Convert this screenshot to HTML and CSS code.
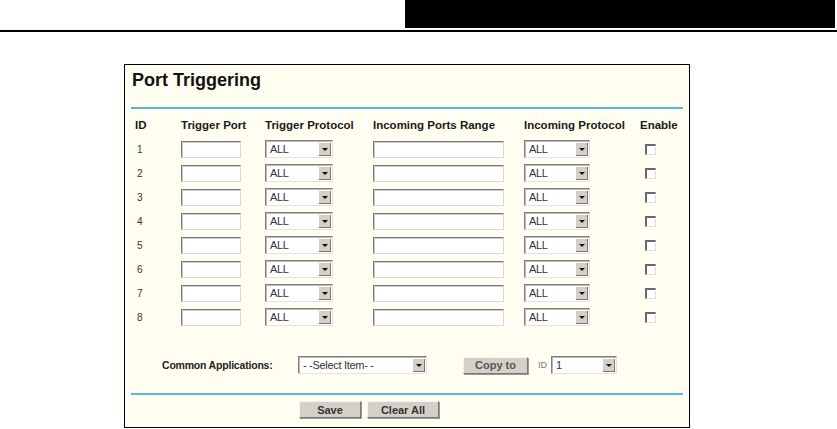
FILE: index.html
```html
<!DOCTYPE html>
<html lang="en">
<head>
  <meta charset="UTF-8">
  <title>Port Triggering</title>
  <link rel="stylesheet" href="styles.css">
</head>
<body>
  <div class="topbar"><div class="blackbox"></div></div>
  <div class="rule"></div>

  <div class="panel">
    <h1 class="title">Port Triggering</h1>
    <div class="bluerule"></div>

    <div class="grid">
      <div class="head">ID</div>
      <div class="head">Trigger Port</div>
      <div class="head">Trigger Protocol</div>
      <div class="head">Incoming Ports Range</div>
      <div class="head">Incoming Protocol</div>
      <div class="head">Enable</div>

      <div class="num">1</div>
      <div><input class="txt port" type="text"></div>
      <div><div class="combo"><span>ALL</span><b class="arrow"></b></div></div>
      <div><input class="txt range" type="text"></div>
      <div><div class="combo narrow"><span>ALL</span><b class="arrow"></b></div></div>
      <div><span class="check"></span></div>

      <div class="num">2</div>
      <div><input class="txt port" type="text"></div>
      <div><div class="combo"><span>ALL</span><b class="arrow"></b></div></div>
      <div><input class="txt range" type="text"></div>
      <div><div class="combo narrow"><span>ALL</span><b class="arrow"></b></div></div>
      <div><span class="check"></span></div>

      <div class="num">3</div>
      <div><input class="txt port" type="text"></div>
      <div><div class="combo"><span>ALL</span><b class="arrow"></b></div></div>
      <div><input class="txt range" type="text"></div>
      <div><div class="combo narrow"><span>ALL</span><b class="arrow"></b></div></div>
      <div><span class="check"></span></div>

      <div class="num">4</div>
      <div><input class="txt port" type="text"></div>
      <div><div class="combo"><span>ALL</span><b class="arrow"></b></div></div>
      <div><input class="txt range" type="text"></div>
      <div><div class="combo narrow"><span>ALL</span><b class="arrow"></b></div></div>
      <div><span class="check"></span></div>

      <div class="num">5</div>
      <div><input class="txt port" type="text"></div>
      <div><div class="combo"><span>ALL</span><b class="arrow"></b></div></div>
      <div><input class="txt range" type="text"></div>
      <div><div class="combo narrow"><span>ALL</span><b class="arrow"></b></div></div>
      <div><span class="check"></span></div>

      <div class="num">6</div>
      <div><input class="txt port" type="text"></div>
      <div><div class="combo"><span>ALL</span><b class="arrow"></b></div></div>
      <div><input class="txt range" type="text"></div>
      <div><div class="combo narrow"><span>ALL</span><b class="arrow"></b></div></div>
      <div><span class="check"></span></div>

      <div class="num">7</div>
      <div><input class="txt port" type="text"></div>
      <div><div class="combo"><span>ALL</span><b class="arrow"></b></div></div>
      <div><input class="txt range" type="text"></div>
      <div><div class="combo narrow"><span>ALL</span><b class="arrow"></b></div></div>
      <div><span class="check"></span></div>

      <div class="num">8</div>
      <div><input class="txt port" type="text"></div>
      <div><div class="combo"><span>ALL</span><b class="arrow"></b></div></div>
      <div><input class="txt range" type="text"></div>
      <div><div class="combo narrow"><span>ALL</span><b class="arrow"></b></div></div>
      <div><span class="check"></span></div>
    </div>

    <div class="apps">
      <span class="apps-label">Common Applications:</span>
      <div class="combo wide"><span>- -Select Item- -</span><b class="arrow"></b></div>
      <button class="btn copy">Copy to</button>
      <span class="id-label">ID</span>
      <div class="combo idsel"><span>1</span><b class="arrow"></b></div>
    </div>

    <div class="bluerule second"></div>

    <div class="actions">
      <button class="btn save">Save</button>
      <button class="btn clear">Clear All</button>
    </div>
  </div>
</body>
</html>
```

FILE: styles.css
```css
body {
  margin: 0;
  background: #fff;
  font-family: "Liberation Sans", Arial, sans-serif;
  color: #222;
}
.topbar {
  display: flex;
  justify-content: flex-end;
  height: 28px;
  padding-right: 2px;
}
.blackbox {
  width: 430px;
  background: #000;
}
.rule {
  margin-top: 2px;
  height: 2px;
  background: #000;
}
.panel {
  box-sizing: border-box;
  width: 566px;
  height: 364px;
  margin: 32px 0 0 124px;
  border: 1px solid #000;
  background: #fffef0;
}
.title {
  margin: 0;
  padding: 4px 0 0 7px;
  height: 22px;
  line-height: 22px;
  font-size: 18px;
  font-weight: bold;
  color: #111;
}
.bluerule {
  margin: 16px 6px 0 6px;
  height: 2px;
  background: #55b9dc;
}
.grid {
  display: grid;
  grid-template-columns: 46px 84px 108px 151px 116px 50px;
  grid-auto-rows: 24px;
  align-items: center;
  margin-top: 4px;
  padding-left: 10px;
}
.head {
  font-size: 11.5px;
  font-weight: bold;
  color: #1a1a1a;
  white-space: nowrap;
}
.num {
  font-size: 10px;
  color: #333;
  padding-left: 2px;
}
.txt {
  display: block;
  box-sizing: border-box;
  height: 17px;
  margin: 0;
  padding: 0;
  background: #fff;
  border: 1px solid #d8d8d8;
  border-top-color: #7b7b7b;
  border-left-color: #7b7b7b;
  box-shadow: inset 1px 1px 0 #c8c8c8;
}
.txt.port {
  width: 60px;
}
.txt.range {
  width: 131px;
}
.combo {
  box-sizing: border-box;
  display: flex;
  align-items: center;
  justify-content: space-between;
  width: 68px;
  height: 18px;
  background: #fff;
  border: 1px solid #e2e2e2;
  border-top-color: #808080;
  border-left-color: #808080;
  box-shadow: inset 1px 1px 0 #b8b8b8;
  padding: 1px 1px 1px 4px;
  font-size: 11px;
  color: #333;
  letter-spacing: -0.3px;
}
.combo.narrow {
  width: 66px;
}
.combo.wide {
  width: 129px;
}
.combo.idsel {
  width: 66px;
}
.arrow {
  position: relative;
  width: 12px;
  height: 13px;
  background: #d4d0c8;
  border-right: 1px solid #777;
  border-bottom: 1px solid #777;
  box-sizing: border-box;
}
.arrow::after {
  content: "";
  position: absolute;
  left: 3px;
  top: 5px;
  border-left: 3px solid transparent;
  border-right: 3px solid transparent;
  border-top: 3px solid #111;
}
.check {
  display: block;
  box-sizing: border-box;
  width: 11px;
  height: 11px;
  margin-left: 5px;
  background: #fff;
  border: 1px solid #ddd;
  border-top: 2px solid #6a6a6a;
  border-left: 2px solid #6a6a6a;
}
.apps {
  display: flex;
  align-items: center;
  height: 24px;
  margin-top: 24px;
  padding-left: 37px;
}
.apps-label {
  width: 136px;
  font-size: 10.5px;
  font-weight: bold;
  color: #222;
  letter-spacing: -0.2px;
}
.btn {
  box-sizing: border-box;
  height: 17px;
  margin: 0;
  padding: 0;
  background: #d4d0c8;
  border: 1px solid #777;
  border-top-color: #f4f4f4;
  border-left-color: #f4f4f4;
  box-shadow: 1px 1px 0 #999;
  font-family: "Liberation Sans", Arial, sans-serif;
  font-size: 11px;
  font-weight: bold;
  color: #333;
}
.copy {
  width: 65px;
  margin-left: 36px;
  color: #555;
}
.id-label {
  margin: 0 4px 0 10px;
  font-size: 9px;
  color: #777;
}
.bluerule.second {
  margin-top: 16px;
}
.actions {
  display: flex;
  gap: 6px;
  margin-top: 6px;
  padding-left: 174px;
}
.save {
  width: 62px;
}
.clear {
  width: 72px;
}
```
